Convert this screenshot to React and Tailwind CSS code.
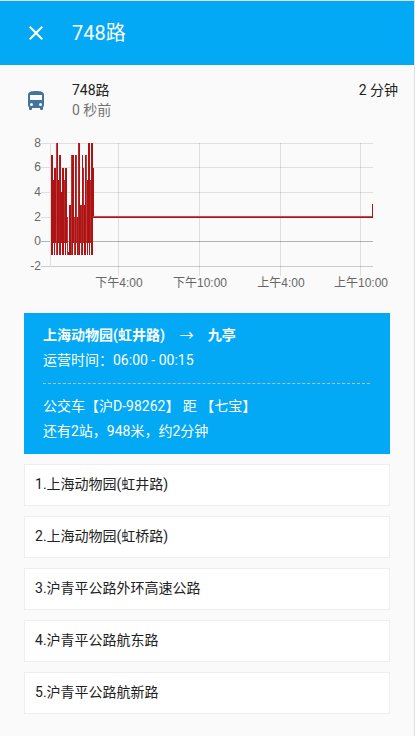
import React from 'react';

const FONT = "font-['Roboto','Noto_Sans_CJK_SC',sans-serif]";

const yFor = (v) => Math.round(241.5 - v * 12.3) - 130;

// [x, highest value, lowest value, opacity]
const samples = [
  [51, 7, -1, 1], [52, 7, -1, 1], [53, 5, 0, 1], [54, 6, -1, 1], [55, 6, 0, 1],
  [56, 8, -1, 0.8], [57, 8, -1, 1], [58, 5, 0, 1], [59, 7, -1, 0.95], [60, 7, -1, 1],
  [61, 4, 0, 1], [62, 6, -1, 1], [63, 6, -1, 1], [64, 5, 0, 0.9], [65, 6, -1, 1],
  [66, 6, 0, 1], [67, 2, -1, 0.85], [68, -0.85, -1, 1], [69, 3, -1, 1], [70, 3, -1, 1],
  [71, 7, -1, 0.85], [72, 7, -1, 1], [73, 7, 0, 1], [74, 2, -1, 0.85], [75, 7, -1, 1],
  [76, 7, 0, 0.85], [77, 2, -1, 1], [78, 8, -1, 0.9], [79, 8, -1, 1], [80, 3, 0, 1],
  [81, 3, -1, 0.9], [82, 7, -1, 1], [83, 6, 0, 0.9], [84, 3, -1, 1], [85, 7, -1, 1],
  [86, 7, 0, 0.8], [87, 5, -1, 1], [88, 8, 0, 1], [89, 8, -1, 1], [90, 5, 0, 0.9],
  [91, 8, -1, 1], [92, 8, -1, 1], [93, 6, 2, 1],
];

const yTicks = [[8, 143], [6, 167], [4, 192], [2, 217], [0, 241], [-2, 266]];
const xTicks = [[118, '下午4:00'], [199, '下午10:00'], [280, '上午4:00'], [360, '上午10:00']];

const stops = [
  '上海动物园(虹井路)',
  '上海动物园(虹桥路)',
  '沪青平公路外环高速公路',
  '沪青平公路航东路',
  '沪青平公路航新路',
];

function Chart() {
  return (
    <svg className="block h-[170px] w-full" viewBox="0 0 414 170" width="414" height="170" shapeRendering="crispEdges">
      {yTicks.map(([v, y]) => (
        <g key={v}>
          <rect x="41" y={y - 130} width="332" height="1" fill={v === 0 ? '#b3b3b3' : v === -2 ? '#cbcbcb' : '#dfdfdf'} />
          <text x="41" y={y - 126} textAnchor="end" fontSize="12" fill="#666" fontFamily="'Liberation Sans', Arial, sans-serif">{v}</text>
        </g>
      ))}
      <rect x="50" y="13" width="1" height="124" fill="#dfdfdf" />
      {xTicks.map(([x, label]) => (
        <g key={x}>
          <rect x={x} y="13" width="1" height="133" fill="#000" opacity="0.11" />
          <text x={x + 1} y="157" textAnchor="middle" fontSize="12" fill="#666" fontFamily="'Liberation Sans', 'Noto Sans CJK SC', sans-serif">{label}</text>
        </g>
      ))}
      {samples.map(([x, hi, lo, o]) => (
        <rect key={x} x={x} y={yFor(hi)} width="1" height={yFor(lo) - yFor(hi) + 1} fill="#ae1212" opacity={o} />
      ))}
      <rect x="93" y="86" width="280" height="1" fill="#c94b4b" />
      <rect x="93" y="87" width="280" height="1" fill="#ae1212" />
      <rect x="372" y="74" width="1" height="14" fill="#ae1212" />
    </svg>
  );
}

export default function App() {
  return (
    <div className={`h-[736px] w-[415px] overflow-hidden border-t border-r border-[#dedede] bg-[#fafafa] text-sm text-[#212121] ${FONT}`}>
      <header className="flex h-16 items-center bg-[#03a9f4] text-white">
        <svg className="ml-6 size-6" viewBox="0 0 24 24" fill="currentColor">
          <path d="M19 6.41 17.59 5 12 10.59 6.41 5 5 6.41 10.59 12 5 17.59 6.41 19 12 13.41 17.59 19 19 17.59 13.41 12z" />
        </svg>
        <h1 className="ml-6 text-xl leading-6">748路</h1>
      </header>

      <section className="flex h-[65px] items-start pt-[15px] pr-4">
        <svg className="mt-[9px] ml-6 size-6 text-[#44739e]" viewBox="0 0 24 24" fill="currentColor">
          <path d="M18 11H6V6h12m-1.500 11a1.500 1.500 0 0 1-1.500-1.500 1.500 1.500 0 0 1 1.500-1.500 1.500 1.500 0 0 1 1.500 1.500 1.500 1.500 0 0 1-1.500 1.500m-9 0A1.500 1.500 0 0 1 6 15.500 1.500 1.500 0 0 1 7.500 14 1.500 1.500 0 0 1 9 15.500 1.500 1.500 0 0 1 7.500 17M4 16c0 .88.39 1.670 1 2.220V20a1 1 0 0 0 1 1h1a1 1 0 0 0 1-1v-1h8v1a1 1 0 0 0 1 1h1a1 1 0 0 0 1-1v-1.780c.61-.55 1-1.340 1-2.220V6c0-3.500-3.580-4-8-4s-8 .5-8 4v10z" />
        </svg>
        <div className="ml-6 flex-1 leading-5">
          <div>748路</div>
          <div className="text-[#727272]">0 秒前</div>
        </div>
        <div className="leading-5">2 分钟</div>
      </section>

      <Chart />

      <main className="mt-[13px] pr-6 pl-6">
        <section className="h-[141px] bg-[#03a9f4] pt-[10px] pr-5 pl-[19px] leading-[25px] text-white">
          <div className="flex font-bold">
            <span>上海动物园(虹井路)</span>
            <span className="mr-[14px] ml-[15px] font-normal">→</span>
            <span>九亭</span>
          </div>
          <div>运营时间：06:00 - 00:15</div>
          <div className="mt-[10px] mb-[10px] border-t border-dashed border-[#bdbdbd]" />
          <div className="whitespace-pre">公交车【沪D-98262】 距 【七宝】</div>
          <div>还有2站，948米，约2分钟</div>
        </section>
        <ol className="mt-[10px] flex flex-col gap-[10px]">
          {stops.map((name, i) => (
            <li key={name} className="h-[42px] border border-[#eee] bg-white pl-[10px] leading-[38px]">
              {i + 1}.{name}
            </li>
          ))}
        </ol>
      </main>
    </div>
  );
}
